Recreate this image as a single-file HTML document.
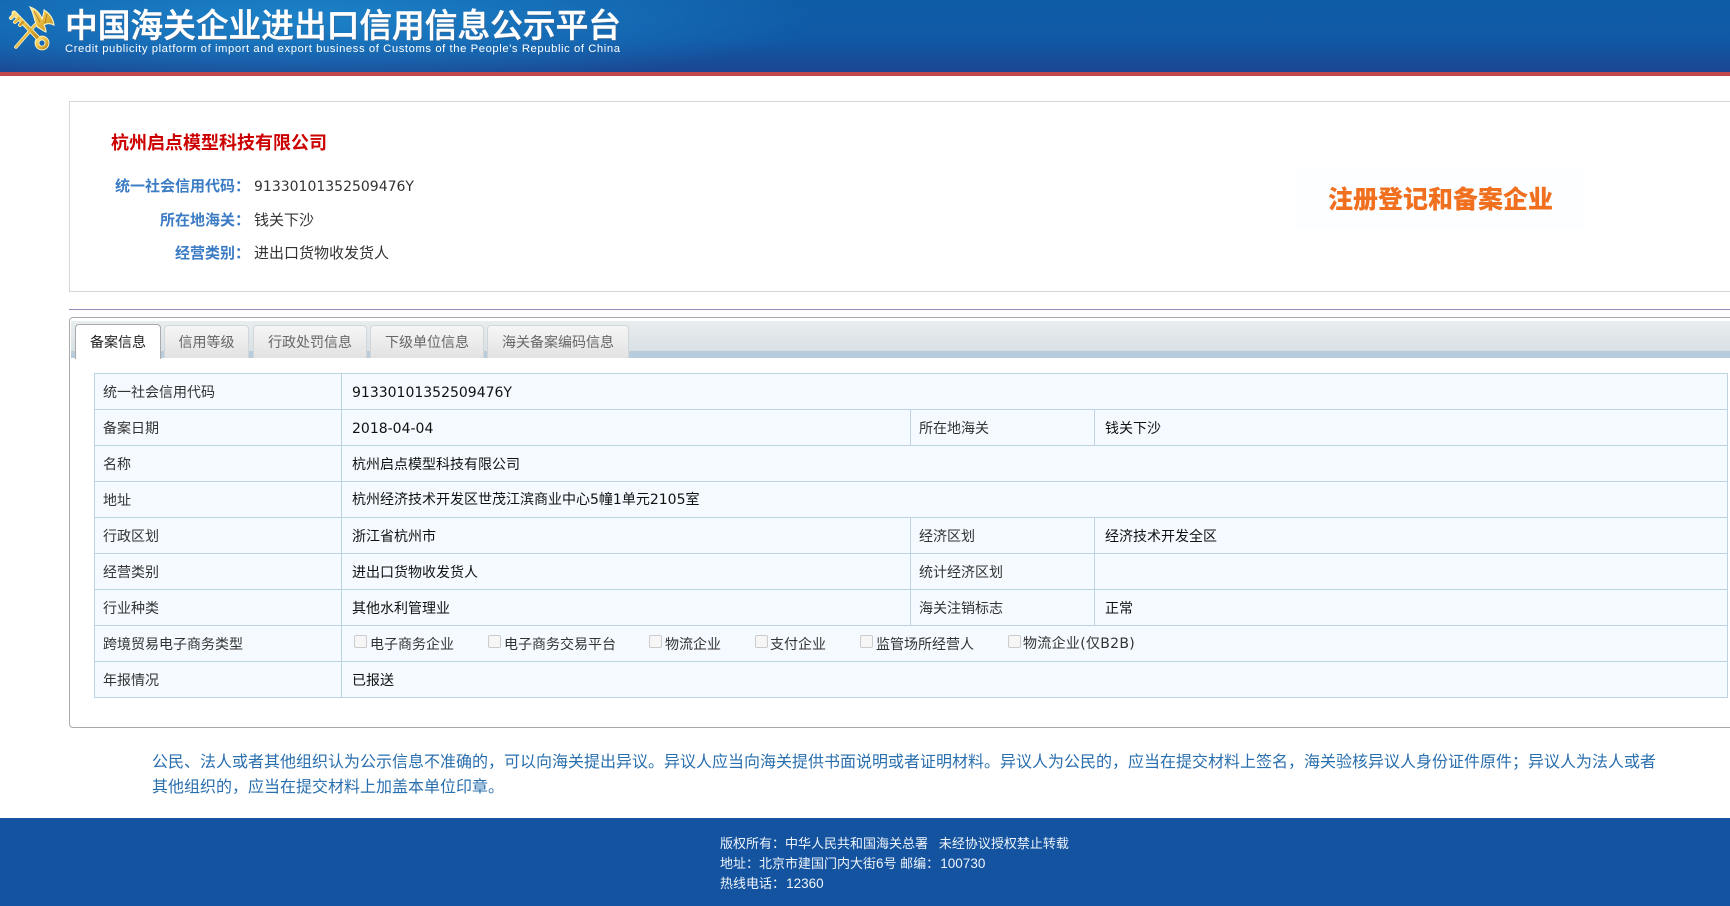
<!DOCTYPE html>
<html lang="zh-CN">
<head>
<meta charset="utf-8">
<title>中国海关企业进出口信用信息公示平台</title>
<style>
html,body{margin:0;padding:0;width:1730px;height:906px;overflow:hidden;background:#fff;}
body{font-family:"Liberation Sans","Noto Sans CJK SC",sans-serif;font-size:14px;color:#333;position:relative;}
.abs{position:absolute;white-space:nowrap;}
#hdr{position:absolute;left:0;top:0;width:1730px;height:72px;
background:radial-gradient(ellipse 520px 70px at 300px 18px,rgba(30,135,205,.9),rgba(30,135,205,0) 100%),linear-gradient(180deg,#0f5ca6 0%,#1059a6 55%,#1b4692 100%);}
#red{position:absolute;left:0;top:72px;width:1730px;height:4px;background:#c1474b;}
#box1{position:absolute;left:69px;top:101px;width:1700px;height:189px;border:1px solid #d6d6d6;}
.lab{color:#3b7cc4;font-weight:bold;text-align:right;width:150px;left:100px;line-height:20px;font-size:15px;}
.col{font-family:"Noto Sans CJK TC",sans-serif;}
.val{left:254px;line-height:20px;color:#333;font-size:15px;}
.dj{font-family:"DejaVu Sans","Noto Sans CJK SC",sans-serif;}
.val.dj{font-size:14px;}
#badgebg{position:absolute;left:1295px;top:167px;width:290px;height:62px;background:#fdfeff;}
#badge{left:1328px;top:185px;font-size:25px;line-height:30px;font-weight:900;color:#f0701f;}
#pline{position:absolute;left:69px;top:309px;width:1700px;height:1px;background:#9a86b8;}
#panel{position:absolute;left:69px;top:317px;width:1700px;height:409px;border:1px solid #aaa;border-radius:4px;background:#fff;}
#thead{position:absolute;left:71px;top:321px;width:1680px;height:30px;background:linear-gradient(180deg,#e8edef,#d9e1e5);}
#tstrip{position:absolute;left:71px;top:351px;width:1680px;height:7px;background:#b7ccdc;}
.tab{position:absolute;top:325px;height:33px;box-sizing:border-box;border:1px solid #d3d6d8;border-bottom:0;border-radius:4px 4px 0 0;
background:linear-gradient(180deg,#f6f6f6,#e2e2e2);text-align:center;line-height:33px;color:#666;font-size:14px;}
.tab.on{top:324px;height:35px;background:#fff;border-color:#aaa;color:#222;line-height:35px;}
table{position:absolute;left:94px;top:373px;border-collapse:collapse;table-layout:fixed;width:1633px;background:#f4faff;}
td{border:1px solid #bdd3e2;height:36px;padding:0 0 0 10px;font-size:14px;line-height:20px;color:#333;box-sizing:border-box;overflow:hidden;white-space:nowrap;}
td.k{padding-left:8px;}
td.v{color:#111;}
td.dj{padding-top:2px;}
.cb{position:absolute;top:0;width:11px;height:11px;border:1px solid #ccc;border-radius:2px;background:#f6f6f6;}
.lb{position:absolute;top:0;line-height:20px;color:#333;}
#note{left:152px;top:750px;font-size:16px;line-height:25px;color:#2a6fae;}
#ftr{position:absolute;left:0;top:818px;width:1730px;height:88px;background:#14539f;}
#ftr div{position:absolute;left:720px;color:#eef4fb;font-size:13px;line-height:20px;white-space:nowrap;}
#ftr span{font-size:13.5px;}
</style>
</head>
<body>
<div id="hdr"></div>
<div id="red"></div>

<svg class="abs" style="left:0;top:0" width="640" height="72" viewBox="0 0 640 72">
  <defs>
    <linearGradient id="g" x1="0" y1="0" x2="1" y2="1">
      <stop offset="0" stop-color="#ffe68a"/>
      <stop offset=".5" stop-color="#e6b93e"/>
      <stop offset="1" stop-color="#c08d1e"/>
    </linearGradient>
  </defs>
  <g fill="none" stroke="#fff3c4" stroke-linecap="round" stroke-linejoin="round">
    <path d="M14 13L38 38" stroke-width="5"/>
    <path d="M16 47L35 25" stroke-width="3.6"/>
    <circle cx="42" cy="43" r="5" stroke-width="4.8"/>
    <path d="M15 14L11 18M19 18L15 22M23 22L20 25" stroke-width="4"/>
  </g>
  <path d="M36 24C34 18 33 12 30 7C36 9 40 13 42 19C43 16 44 13 44 10C49 13 53 18 54 25C50 23 47 23 44 25C45 27 46 29 46 32C43 31 41 29 39 28C37 27 36 26 36 24Z" fill="url(#g)" stroke="#fff3c4" stroke-width="1.1"/>
  <g fill="none" stroke="url(#g)" stroke-linecap="round" stroke-linejoin="round">
    <path d="M14 13L38 38" stroke-width="3.2"/>
    <path d="M16 47L35 25" stroke-width="2"/>
    <circle cx="42" cy="43" r="5" stroke-width="3"/>
    <path d="M15 14L11 18M19 18L15 22M23 22L20 25" stroke-width="2.4"/>
  </g>
  <path d="M34 11L40 22M47 14L45 23" stroke="#a97a1a" stroke-width=".8" fill="none"/>
  <text x="65" y="37" textLength="556" lengthAdjust="spacingAndGlyphs" font-family="'Noto Sans CJK SC',sans-serif" font-weight="500" font-size="33" fill="#4a5a78" opacity=".6" transform="translate(1,1)">中国海关企业进出口信用信息公示平台</text>
  <text x="65" y="37" textLength="556" lengthAdjust="spacingAndGlyphs" font-family="'Noto Sans CJK SC',sans-serif" font-weight="500" font-size="33" fill="#ffffff" stroke="#ffffff" stroke-width=".5">中国海关企业进出口信用信息公示平台</text>
  <text x="65" y="52" textLength="555" lengthAdjust="spacing" font-family="'Liberation Sans',sans-serif" font-size="11.3" fill="#ffffff">Credit publicity platform of import and export business of Customs of the People's Republic of China</text>
</svg>

<div id="box1"></div>
<div class="abs" style="left:111px;top:130px;font-size:18px;line-height:26px;font-weight:bold;color:#cc0000;">杭州启点模型科技有限公司</div>
<div class="abs lab" style="top:176px;">统一社会信用代码<span class="col">：</span></div>
<div class="abs val dj" style="top:177px;">91330101352509476Y</div>
<div class="abs lab" style="top:210px;">所在地海关<span class="col">：</span></div>
<div class="abs val" style="top:211px;">钱关下沙</div>
<div class="abs lab" style="top:243px;">经营类别<span class="col">：</span></div>
<div class="abs val" style="top:244px;">进出口货物收发货人</div>

<div id="badgebg"></div>
<div class="abs" id="badge">注册登记和备案企业</div>

<div id="pline"></div>
<div id="panel"></div>
<div id="thead"></div>
<div id="tstrip"></div>
<div class="tab on" style="left:75px;width:86px;">备案信息</div>
<div class="tab" style="left:164px;width:85px;">信用等级</div>
<div class="tab" style="left:253px;width:114px;">行政处罚信息</div>
<div class="tab" style="left:370px;width:114px;">下级单位信息</div>
<div class="tab" style="left:487px;width:142px;">海关备案编码信息</div>

<table>
<colgroup><col style="width:247px"><col style="width:569px"><col style="width:184px"><col style="width:633px"></colgroup>
<tr><td class="k">统一社会信用代码</td><td class="v dj" colspan="3">91330101352509476Y</td></tr>
<tr><td class="k">备案日期</td><td class="v dj">2018-04-04</td><td class="k">所在地海关</td><td class="v">钱关下沙</td></tr>
<tr><td class="k">名称</td><td class="v" colspan="3">杭州启点模型科技有限公司</td></tr>
<tr><td class="k">地址</td><td class="v" colspan="3">杭州经济技术开发区世茂江滨商业中心<span class="dj">5</span>幢<span class="dj">1</span>单元<span class="dj">2105</span>室</td></tr>
<tr><td class="k">行政区划</td><td class="v">浙江省杭州市</td><td class="k">经济区划</td><td class="v">经济技术开发全区</td></tr>
<tr><td class="k">经营类别</td><td class="v">进出口货物收发货人</td><td class="k">统计经济区划</td><td class="v"></td></tr>
<tr><td class="k">行业种类</td><td class="v">其他水利管理业</td><td class="k">海关注销标志</td><td class="v">正常</td></tr>
<tr><td class="k">跨境贸易电子商务类型</td><td colspan="3"></td></tr>
<tr><td class="k">年报情况</td><td class="v" colspan="3">已报送</td></tr>
</table>

<div class="abs" style="left:0;top:634px;width:1730px;height:20px;">
  <span class="cb" style="left:354px;top:1px"></span><span class="lb" style="left:370px">电子商务企业</span>
  <span class="cb" style="left:488px;top:1px"></span><span class="lb" style="left:504px">电子商务交易平台</span>
  <span class="cb" style="left:649px;top:1px"></span><span class="lb" style="left:665px">物流企业</span>
  <span class="cb" style="left:755px;top:1px"></span><span class="lb" style="left:770px">支付企业</span>
  <span class="cb" style="left:860px;top:1px"></span><span class="lb" style="left:876px">监管场所经营人</span>
  <span class="cb" style="left:1008px;top:1px"></span><span class="lb dj" style="left:1023px;letter-spacing:.3px">物流企业(仅B2B)</span>
</div>

<div class="abs" id="note">公民、法人或者其他组织认为公示信息不准确的，可以向海关提出异议。异议人应当向海关提供书面说明或者证明材料。异议人为公民的，应当在提交材料上签名，海关验核异议人身份证件原件；异议人为法人或者<br>其他组织的，应当在提交材料上加盖本单位印章。</div>

<div id="ftr">
  <div style="top:16px">版权所有：中华人民共和国海关总署&nbsp;&nbsp;&nbsp;未经协议授权禁止转载</div>
  <div style="top:36px">地址：北京市建国门内大街<span>6</span>号 邮编：<span>&#8202;100730</span></div>
  <div style="top:56px">热线电话：<span>&#8202;12360</span></div>
</div>
</body>
</html>
